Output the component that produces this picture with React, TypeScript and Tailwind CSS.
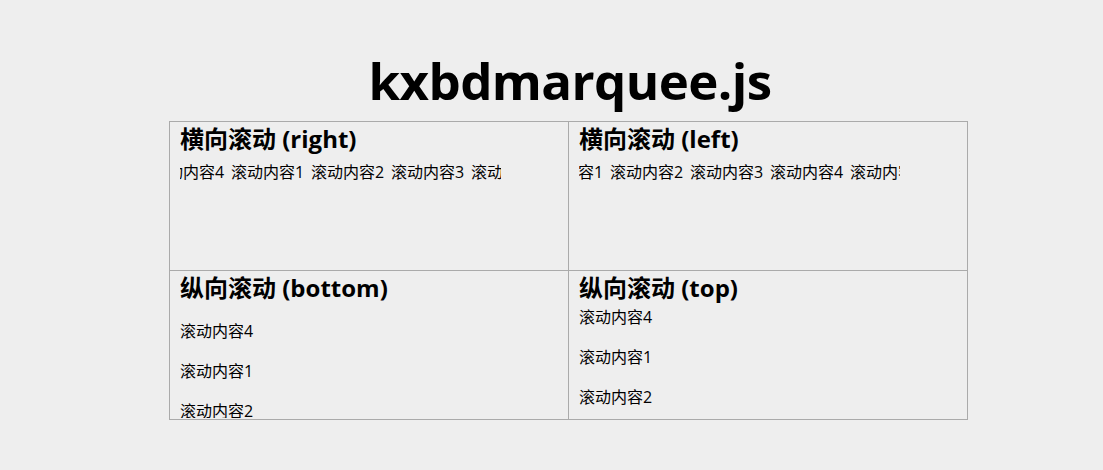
const items = ['滚动内容1', '滚动内容2', '滚动内容3', '滚动内容4']

function HRow({ order, offset }: { order: number[]; offset: string }) {
  return (
    <div className="w-[321px] h-[22px] overflow-hidden mt-[8px]">
      <div className={`flex whitespace-nowrap text-[16px] leading-[22px] ${offset}`}>
        {order.map((n, i) => (
          <span key={i} className="w-20 shrink-0">{items[n - 1]}</span>
        ))}
      </div>
    </div>
  )
}

function VList({ order, top }: { order: number[]; top: string }) {
  return (
    <div className={`flex flex-col text-[16px] leading-[22px] ${top}`}>
      {order.map((n, i) => (
        <div key={i} className="h-10 shrink-0">{items[n - 1]}</div>
      ))}
    </div>
  )
}

export default function App() {
  return (
    <div
      className="min-h-[470px] bg-[#eeeeee] text-black overflow-hidden"
      style={{ fontFamily: '"Open Sans", "Noto Sans CJK SC", sans-serif' }}
    >
      <div className="w-[799px] ml-[169px] pt-[42px]">
        <h1 className="text-center text-[51px] leading-[76px] font-bold tracking-[-0.6px] pl-[3px]">kxbdmarquee.js</h1>

        <div className="grid grid-cols-2 border-r border-b border-[#aaaaaa] mt-[3px]">
          {/* row 1 */}
          <div className="h-[149px] border-l border-t border-[#aaaaaa] pl-[10px] pt-[2px] overflow-hidden">
            <h3 className="text-[24px] leading-[29px] font-bold">横向滚动 (right)</h3>
            <HRow order={[4, 1, 2, 3, 4, 1]} offset="-ml-[29px]" />
          </div>
          <div className="h-[149px] border-l border-t border-[#aaaaaa] pl-[10px] pt-[2px] overflow-hidden">
            <h3 className="text-[24px] leading-[29px] font-bold">横向滚动 (left)</h3>
            <HRow order={[1, 2, 3, 4, 1, 2]} offset="-ml-[49px]" />
          </div>

          {/* row 2 */}
          <div className="h-[149px] border-l border-t border-[#aaaaaa] pl-[10px] pt-[2px] overflow-hidden">
            <h3 className="text-[24px] leading-[29px] font-bold">纵向滚动 (bottom)</h3>
            <div className="h-[116px] overflow-hidden">
              <VList order={[4, 1, 2, 3]} top="mt-[18px]" />
            </div>
          </div>
          <div className="h-[149px] border-l border-t border-[#aaaaaa] pl-[10px] pt-[2px] overflow-hidden">
            <h3 className="text-[24px] leading-[29px] font-bold">纵向滚动 (top)</h3>
            <div className="h-[116px] overflow-hidden">
              <VList order={[4, 1, 2, 3]} top="mt-[4px]" />
            </div>
          </div>
        </div>
      </div>
    </div>
  )
}
